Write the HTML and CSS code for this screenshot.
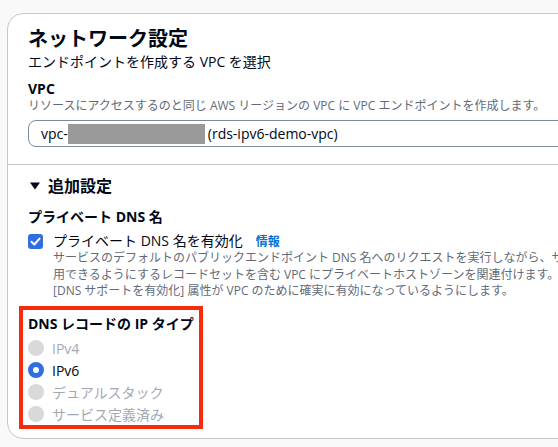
FILE: index.html
```html
<!DOCTYPE html>
<html lang="ja">
<head>
<meta charset="utf-8">
<title>ネットワーク設定</title>
<link rel="stylesheet" href="styles.css">
</head>
<body>
<div class="card">
  <section class="sec sec-top">
    <h2 class="title">ネットワーク設定</h2>
    <p class="subtitle">エンドポイントを作成する VPC を選択</p>
    <div class="field">
      <div class="label">VPC</div>
      <div class="desc">リソースにアクセスするのと同じ AWS リージョンの VPC に VPC エンドポイントを作成します。</div>
      <div class="select"><span>vpc-</span><span class="redact"></span><span>(rds-ipv6-demo-vpc)</span></div>
    </div>
  </section>
  <section class="sec sec-extra">
    <div class="expander">
      <svg class="caret" width="14" height="10" viewBox="0 0 14 10"><path d="M2 1.5 H12 L7 8.5 Z" fill="#000716"/></svg>
      <span>追加設定</span>
    </div>
    <div class="label label-dns">プライベート DNS 名</div>
    <div class="check-row">
      <span class="checkbox">
        <svg width="15" height="15" viewBox="0 0 15 15"><path d="M3.5 7.8 L6.3 10.5 L11.5 4.6" fill="none" stroke="#fff" stroke-width="2" stroke-linecap="round" stroke-linejoin="round"/></svg>
      </span>
      <div class="check-body">
        <div class="check-label">プライベート DNS 名を有効化<a class="info">情報</a></div>
        <div class="check-desc">サービスのデフォルトのパブリックエンドポイント DNS 名へのリクエストを実行しながら、サービスのプライベートエンドポイントを使<br>用できるようにするレコードセットを含む VPC にプライベートホストゾーンを関連付けます。<br>[DNS サポートを有効化] 属性が VPC のために確実に有効になっているようにします。</div>
      </div>
    </div>
    <div class="highlight">
      <div class="label label-ip">DNS レコードの IP タイプ</div>
      <ul class="radios">
        <li class="radio disabled"><span class="dot"></span>IPv4</li>
        <li class="radio checked"><span class="dot"></span>IPv6</li>
        <li class="radio disabled"><span class="dot"></span>デュアルスタック</li>
        <li class="radio disabled"><span class="dot"></span>サービス定義済み</li>
      </ul>
    </div>
  </section>
</div>
</body>
</html>
```

FILE: styles.css
```css
html, body {
  margin: 0;
  padding: 0;
}
body {
  width: 558px;
  height: 447px;
  overflow: hidden;
  background: #f9f9f9;
  font-family: "Open Sans", "Noto Sans CJK JP", sans-serif;
  color: #000716;
}
.card {
  margin: 13px 0 0 7px;
  width: 640px;
  background: #fff;
  border: 1px solid #c6c6cd;
  border-radius: 16px;
}
.sec-top {
  padding: 13px 20px 17px;
}
.title {
  margin: 0;
  font-size: 20px;
  line-height: 24px;
  font-weight: 700;
}
.subtitle {
  margin: 1px 0 0;
  font-size: 14px;
  line-height: 20px;
}
.field {
  margin-top: 8px;
}
.label {
  font-size: 14px;
  line-height: 18px;
  font-weight: 700;
}
.desc {
  font-size: 12px;
  line-height: 16px;
  color: #5f6b7a;
  white-space: nowrap;
}
.select {
  margin-top: 6px;
  height: 27px;
  box-sizing: border-box;
  border: 1px solid #7d8998;
  border-radius: 8px;
  padding: 0 12px;
  display: flex;
  align-items: center;
  font-size: 14px;
}
.redact {
  width: 137px;
  height: 20px;
  background: #9a9a9a;
  margin-right: 3px;
}
.sec-extra {
  border-top: 1px solid #c6c6cd;
  padding: 10px 20px 9px;
}
.expander {
  display: flex;
  align-items: center;
  gap: 6px;
  font-size: 16px;
  line-height: 22px;
  font-weight: 700;
}
.label-dns {
  margin-top: 10px;
  line-height: 20px;
}
.check-row {
  display: flex;
  gap: 10px;
  margin-top: 6px;
}
.checkbox {
  flex: none;
  width: 15px;
  height: 15px;
  margin-top: 1px;
  border-radius: 3px;
  background: #2f6fe2;
  display: flex;
}
.check-label {
  font-size: 14px;
  line-height: 16px;
}
.info {
  margin-left: 13px;
  font-size: 12px;
  font-weight: 700;
  color: #0972d3;
}
.check-desc {
  font-size: 12px;
  line-height: 16.5px;
  color: #5f6b7a;
  white-space: nowrap;
}
.highlight {
  margin: 6.5px 0 0 -9px;
  width: 184px;
  box-sizing: border-box;
  border: 4px solid #f72a0c;
  padding: 4px 5px 0;
}
.label-ip {
  line-height: 20px;
  white-space: nowrap;
}
.radios {
  list-style: none;
  margin: 3px 0 0;
  padding: 0;
}
.radio {
  display: flex;
  align-items: center;
  gap: 8px;
  height: 22px;
  font-size: 14px;
  white-space: nowrap;
}
.dot {
  flex: none;
  width: 16px;
  height: 16px;
  box-sizing: border-box;
  border-radius: 50%;
}
.disabled {
  color: #a2a9b3;
}
.disabled .dot {
  background: #d9d9dc;
}
.checked .dot {
  background: #fff;
  border: 5px solid #2f6fe2;
}
```
